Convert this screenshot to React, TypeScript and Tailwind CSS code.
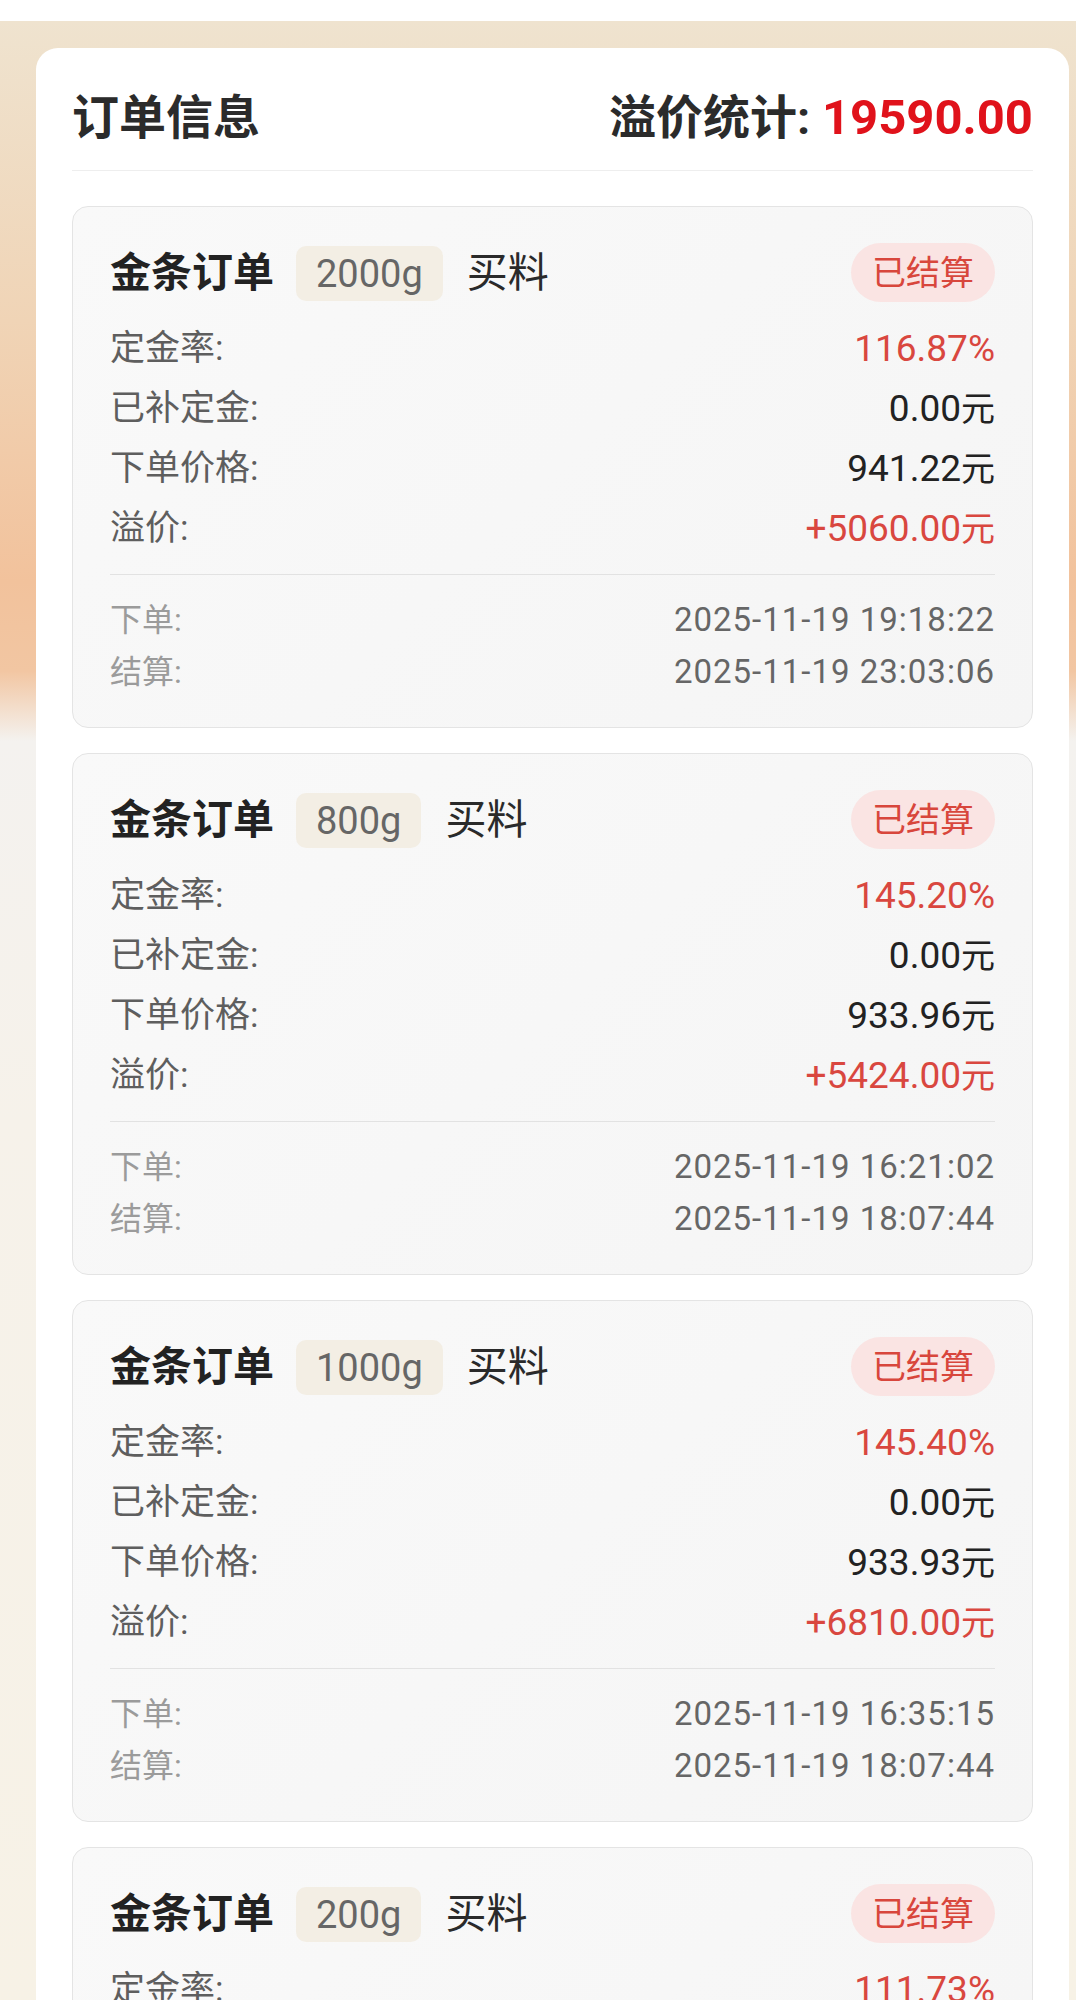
import React from "react";

type Order = {
  weight: string;
  rate: string;
  added: string;
  price: string;
  premium: string;
  placed: string;
  settled: string;
};

const orders: Order[] = [
  {
    weight: "2000g",
    rate: "116.87%",
    added: "0.00元",
    price: "941.22元",
    premium: "+5060.00元",
    placed: "2025-11-19 19:18:22",
    settled: "2025-11-19 23:03:06",
  },
  {
    weight: "800g",
    rate: "145.20%",
    added: "0.00元",
    price: "933.96元",
    premium: "+5424.00元",
    placed: "2025-11-19 16:21:02",
    settled: "2025-11-19 18:07:44",
  },
  {
    weight: "1000g",
    rate: "145.40%",
    added: "0.00元",
    price: "933.93元",
    premium: "+6810.00元",
    placed: "2025-11-19 16:35:15",
    settled: "2025-11-19 18:07:44",
  },
  {
    weight: "200g",
    rate: "111.73%",
    added: "0.00元",
    price: "933.52元",
    premium: "+2296.00元",
    placed: "2025-11-19 16:10:41",
    settled: "2025-11-19 18:07:44",
  },
];

function Value({ v, className }: { v: string; className: string }) {
  const hasUnit = v.endsWith("元");
  const num = hasUnit ? v.slice(0, -1) : v;
  return (
    <span className={className}>
      <span className="text-[37px]">{num}</span>
      {hasUnit && <span className="text-[34px]">元</span>}
    </span>
  );
}

function Row({ label, value, red }: { label: string; value: string; red?: boolean }) {
  return (
    <div className="flex h-[60px] items-center justify-between">
      <span className="text-[35px] text-[#5e5e5e]">{label}</span>
      <Value v={value} className={red ? "text-[#d9473f]" : "text-[#222]"} />
    </div>
  );
}

function OrderCard({ o }: { o: Order }) {
  return (
    <div className="rounded-[16px] border border-[#e4e4e4] bg-[linear-gradient(135deg,#f9f9f9,#f5f5f5)] px-[37px] pt-[36px] pb-[29px]">
      <div className="flex h-[59px] items-center justify-between">
        <div className="flex items-center pt-[2px]">
          <span className="text-[41px] font-bold leading-none text-[#222]">金条订单</span>
          <span className="ml-[22px] flex h-[55px] items-center rounded-[10px] bg-[#f3eee4] px-[20px] text-[38px] leading-none text-[#666]">
            {o.weight}
          </span>
          <span className="ml-[24px] text-[41px] leading-none text-[#2a2a2a]">买料</span>
        </div>
        <span className="flex h-[59px] w-[144px] items-center justify-center rounded-full bg-[#fae4e3] text-[34px] leading-none text-[#d8463c]">
          已结算
        </span>
      </div>
      <div className="mt-[17px]">
        <Row label="定金率:" value={o.rate} red />
        <Row label="已补定金:" value={o.added} />
        <Row label="下单价格:" value={o.price} />
        <Row label="溢价:" value={o.premium} red />
      </div>
      <div className="mt-[15px] border-t border-[#e2e2e2] pt-[19px]">
        <div className="flex h-[52px] items-center justify-between">
          <span className="text-[32px] text-[#9b9b9b]">下单:</span>
          <span className="text-[33px] tracking-[1px] text-[#666]">{o.placed}</span>
        </div>
        <div className="flex h-[52px] items-center justify-between">
          <span className="text-[32px] text-[#9b9b9b]">结算:</span>
          <span className="text-[33px] tracking-[1px] text-[#666]">{o.settled}</span>
        </div>
      </div>
    </div>
  );
}

export default function App() {
  return (
    <div className="h-[2000px] overflow-hidden bg-white font-[Roboto,'Noto_Sans_CJK_SC',sans-serif]">
      <div className="h-[21px] bg-white" />
      <div className="min-h-[1979px] bg-[linear-gradient(180deg,#efe3cf_0px,#f0d4b6_300px,#f2c29c_560px,#f2c6a2_650px,#f4f2ef_720px,#f6f2ea_1100px,#f7f2e6_1979px)] pt-[27px] pl-[36px]">
        <div className="w-[1033px] rounded-t-[22px] bg-white px-[36px] pt-[36px] pb-[40px]">
          <div className="flex h-[66px] items-center justify-between">
            <span className="text-[47px] font-bold leading-none text-[#2b2b2b]">订单信息</span>
            <span className="text-[47px] font-bold leading-none text-[#2b2b2b]">
              溢价统计: <span className="text-[49px] text-[#e0121b]">19590.00</span>
            </span>
          </div>
          <div className="mt-[20px] h-px bg-[#eeeeee]" />
          <div className="mt-[35px] flex flex-col gap-[25px]">
            {orders.map((o, i) => (
              <OrderCard key={i} o={o} />
            ))}
          </div>
        </div>
      </div>
    </div>
  );
}
